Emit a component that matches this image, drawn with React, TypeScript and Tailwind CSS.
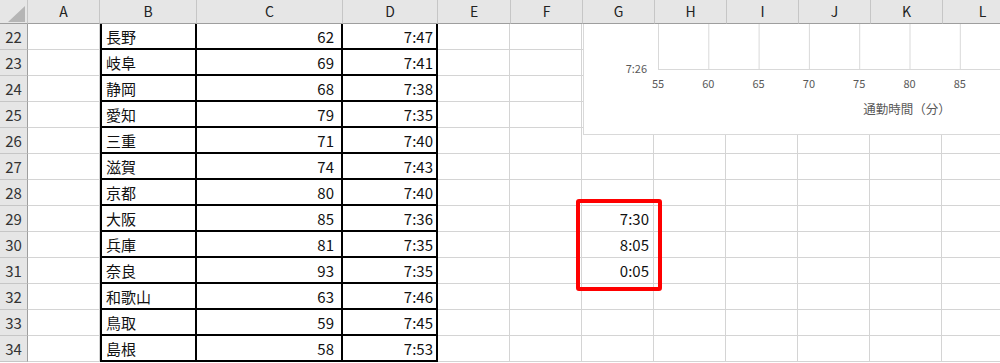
import React from "react";

type Row = { n: number; pref: string; mins: number; time: string; g?: string };

const ROWS: Row[] = [
  { n: 22, pref: "長野", mins: 62, time: "7:47" },
  { n: 23, pref: "岐阜", mins: 69, time: "7:41" },
  { n: 24, pref: "静岡", mins: 68, time: "7:38" },
  { n: 25, pref: "愛知", mins: 79, time: "7:35" },
  { n: 26, pref: "三重", mins: 71, time: "7:40" },
  { n: 27, pref: "滋賀", mins: 74, time: "7:43" },
  { n: 28, pref: "京都", mins: 80, time: "7:40" },
  { n: 29, pref: "大阪", mins: 85, time: "7:36", g: "7:30" },
  { n: 30, pref: "兵庫", mins: 81, time: "7:35", g: "8:05" },
  { n: 31, pref: "奈良", mins: 93, time: "7:35", g: "0:05" },
  { n: 32, pref: "和歌山", mins: 63, time: "7:46" },
  { n: 33, pref: "鳥取", mins: 59, time: "7:45" },
  { n: 34, pref: "島根", mins: 58, time: "7:53" },
];

const HEADS = [
  { label: "A", w: "w-[72px]" },
  { label: "B", w: "w-[97px]" },
  { label: "C", w: "w-[146px]" },
  { label: "D", w: "w-[95px]" },
  { label: "E", w: "w-[73px]" },
  { label: "F", w: "w-[72px]" },
  { label: "G", w: "w-[72px]" },
  { label: "H", w: "w-[72px]" },
  { label: "I", w: "w-[72px]" },
  { label: "J", w: "w-[72px]" },
  { label: "K", w: "w-[72px]" },
  { label: "L", w: "w-[80px]" },
];

const grid = "shrink-0 h-full border-r border-b border-[#d4d4d4]";

function Corner() {
  return (
    <div className="w-[28px] h-full shrink-0 bg-[#e6e6e6] border-r border-b border-r-[#c6c6c6] border-b-[#9e9e9e]">
      <svg width="28" height="24" viewBox="0 0 28 24">
        <polygon points="8,22 25,22 25,6" fill="#b5b5b5" />
      </svg>
    </div>
  );
}

function Chart() {
  const xs = [55, 60, 65, 70, 75, 80, 85];
  return (
    <div className="absolute left-[583px] top-[24px] w-[430px] h-[111px] bg-white border-l border-b border-[#d9d9d9]">
      <svg width="430" height="110" className="font-['Noto_Sans_CJK_JP',sans-serif]">
        {xs.map((v, i) => (
          <line key={v} x1={74.5 + i * 50.3} y1={0} x2={74.5 + i * 50.3} y2={45} stroke="#d9d9d9" strokeWidth={1} />
        ))}
        <line x1={74} y1={45.5} x2={430} y2={45.5} stroke="#d9d9d9" strokeWidth={1} />
        <text x={63} y={48.5} textAnchor="end" fontSize="11" fill="#595959">7:26</text>
        {xs.map((v, i) => (
          <text key={v} x={74 + i * 50.3} y={64} textAnchor="middle" fontSize="11" fill="#595959">
            {v}
          </text>
        ))}
        <text x={323} y={90} textAnchor="middle" fontSize="12.5" fill="#595959">通勤時間（分）</text>
      </svg>
    </div>
  );
}

export default function App() {
  return (
    <div className="relative w-[1000px] h-[363px] overflow-hidden bg-white text-[#111] font-['Noto_Sans_CJK_JP',sans-serif]">
      <div className="flex h-[24px]">
        <Corner />
        {HEADS.map((h) => (
          <div
            key={h.label}
            className={`${h.w} shrink-0 h-full flex items-center justify-center bg-[#e6e6e6] border-r border-b border-r-[#c6c6c6] border-b-[#9e9e9e] text-[14px] text-[#222]`}
          >
            {h.label}
          </div>
        ))}
      </div>

      {ROWS.map((r) => (
        <div key={r.n} className="flex h-[26px] text-[15px] leading-none">
          <div className="w-[28px] shrink-0 h-full flex items-center justify-center bg-[#e6e6e6] border-r border-b border-r-[#9e9e9e] border-b-[#c6c6c6] text-[#333]">
            {r.n}
          </div>
          <div className={`w-[72px] ${grid}`} />
          <div className="w-[97px] shrink-0 h-full flex items-center pl-[4px] border-l-2 border-r-2 border-b-2 border-black">
            {r.pref}
          </div>
          <div className="w-[146px] shrink-0 h-full flex items-center justify-end pr-[7px] border-r-2 border-b-2 border-black">
            {r.mins}
          </div>
          <div className="w-[95px] shrink-0 h-full flex items-center justify-end pr-[3px] border-r-2 border-b-2 border-black">
            {r.time}
          </div>
          <div className={`w-[72px] ${grid}`} />
          <div className={`w-[72px] ${grid}`} />
          <div className={`w-[72px] ${grid} flex items-center justify-end pr-[4px]`}>{r.g ?? ""}</div>
          <div className={`w-[72px] ${grid}`} />
          <div className={`w-[72px] ${grid}`} />
          <div className={`w-[72px] ${grid}`} />
          <div className={`w-[72px] ${grid}`} />
          <div className={`w-[80px] ${grid}`} />
        </div>
      ))}

      <Chart />

      <div className="absolute left-[576px] top-[199px] w-[86px] h-[92px] border-4 border-[#ff0000] rounded-[3px]" />
    </div>
  );
}
